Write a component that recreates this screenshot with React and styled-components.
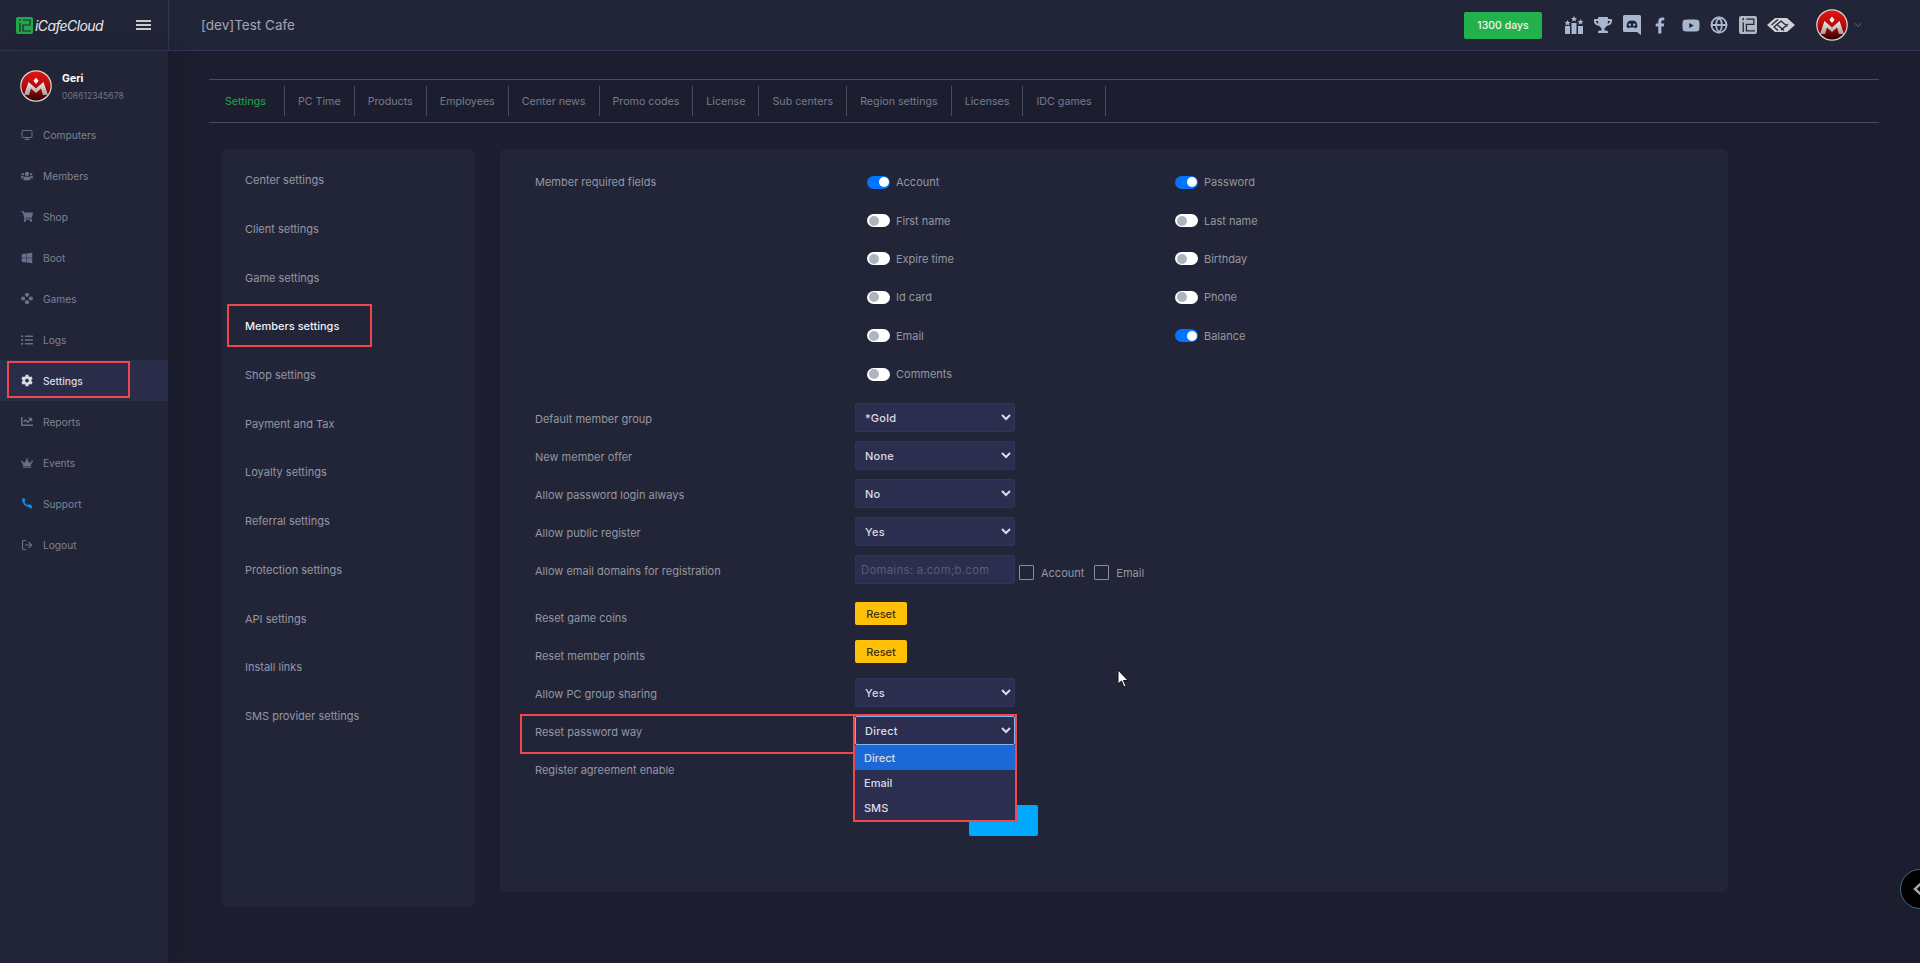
import React from 'react';
import styled, { createGlobalStyle } from 'styled-components';
import {
    FaUsers, FaShoppingCart, FaWindows, FaListUl, FaCog, FaChartLine,
    FaCrown, FaTrophy, FaFacebookF, FaYoutube,
} from 'react-icons/fa';
import { FiMonitor, FiGlobe, FiChevronDown, FiLogOut } from 'react-icons/fi';

const GlobalStyle = createGlobalStyle`
    html, body {
        margin: 0;
        height: 100%;
        background: #1c1e2f;
        overflow: hidden;
    }
    * { box-sizing: border-box; }
    body {
        font-family: Inter, "Noto Sans", "Liberation Sans", sans-serif;
        font-size: 11px;
    }
`;

const Page = styled.div`
    position: relative;
    width: 1920px;
    height: 963px;
    overflow: hidden;
    display: flex;
    flex-direction: column;
`;

// top bar
const TopBar = styled.header`
    height: 51px;
    flex: none;
    display: flex;
    align-items: center;
    background: #222538;
    border-bottom: 1px solid #333655;
`;

const Brand = styled.div`
    width: 169px;
    height: 50px;
    flex: none;
    display: flex;
    align-items: center;
    padding-left: 16px;
    border-right: 1px solid #333655;
    color: #e6e7ea;
`;

const BrandName = styled.span`
    margin-left: 2px;
    width: 67px;
    font-size: 14px;
    font-style: italic;
    letter-spacing: -.6px;
    white-space: nowrap;
`;

const Burger = styled.span`
    margin-left: 34px;
    width: 15px;
    height: 10px;
    border-top: 2px solid #c8cad0;
    border-bottom: 2px solid #c8cad0;
    position: relative;

    &::after {
        content: '';
        position: absolute;
        left: 0;
        right: 0;
        top: 2px;
        height: 2px;
        background: #c8cad0;
    }
`;

const CafeTitle = styled.div`
    margin-left: 32px;
    flex: 1;
    font-size: 13.5px;
    color: #a4a6b2;
`;

const DaysBadge = styled.div`
    width: 78px;
    height: 27px;
    margin-right: 22px;
    border-radius: 2px;
    display: flex;
    align-items: center;
    justify-content: center;
    background: #22b14c;
    color: #f1f7f2;
    font-size: 10.5px;
    font-weight: 500;
`;

const IconLinks = styled.div`
    display: flex;
    align-items: center;
    color: #a8b6cf;
`;

const IconLink = styled.span`
    display: flex;
    align-items: center;
    justify-content: center;
    width: ${p => p.$w}px;
    margin-right: ${p => p.$gap}px;
`;

const UserMenu = styled.div`
    margin-left: 21px;
    margin-right: 56px;
    display: flex;
    align-items: center;
    gap: 4px;
    color: #5e6a85;
`;

// body
const Body = styled.div`
    flex: 1;
    display: flex;
    min-height: 0;
`;

const Sidebar = styled.aside`
    width: 168px;
    flex: none;
    background: #222538;
    box-shadow: 6px 0 18px rgba(18, 19, 32, .25);
`;

const Profile = styled.div`
    height: 63px;
    display: flex;
    align-items: center;
    padding: 7px 0 0 20px;
    gap: 10px;
`;

const ProfileName = styled.div`
    font-size: 10.5px;
    font-weight: 700;
    color: #fff;
    margin-bottom: 6px;
`;

const ProfilePhone = styled.div`
    font-size: 8.6px;
    color: #6f7488;
`;

const NavList = styled.nav`
    display: flex;
    flex-direction: column;
`;

const NavItem = styled.div`
    position: relative;
    height: 41px;
    display: flex;
    align-items: center;
    padding-left: 21px;
    gap: 10px;
    font-size: 10.2px;
    font-weight: ${p => (p.$active ? 500 : 400)};
    color: ${p => (p.$active ? '#d7d9e2' : '#7d8294')};
    background: ${p => (p.$active ? '#2a2d4a' : 'transparent')};
`;

const NavIcon = styled.span`
    width: 12px;
    height: 14px;
    display: flex;
    align-items: center;
    justify-content: center;
    color: ${p => (p.$active ? '#d7d9e2' : '#66708a')};
`;

const Annotation = styled.span`
    position: absolute;
    left: ${p => p.$left}px;
    top: ${p => p.$top}px;
    width: ${p => p.$w}px;
    height: ${p => p.$h}px;
    border: 2px solid #f0474c;
    pointer-events: none;
    z-index: 3;
`;

const Main = styled.main`
    flex: 1;
    padding: 28px 41px 0;
    min-width: 0;
`;

const Tabs = styled.div`
    height: 44px;
    display: flex;
    align-items: center;
    border-top: 1px solid #4a4c5e;
    border-bottom: 1px solid #4a4c5e;
    font-size: 10.7px;
`;

const Tab = styled.div`
    height: 30px;
    display: flex;
    align-items: center;
    padding: 0 ${p => (p.$first ? 18 : 13)}px 0 ${p => (p.$first ? 16 : 13)}px;
    border-right: 1px solid #4a4c5e;
    color: ${p => (p.$active ? '#22a84a' : '#777b8e')};
`;

const Content = styled.div`
    display: flex;
    gap: 25px;
    margin: 26px 0 0 13px;
    align-items: flex-start;
`;

const SideMenu = styled.div`
    width: 253px;
    height: 758px;
    padding-top: 7px;
    border-radius: 6px;
    background: #222538;
`;

const SideMenuItem = styled.div`
    position: relative;
    height: 48.7px;
    display: flex;
    align-items: center;
    padding-left: 23px;
    font-weight: ${p => (p.$active ? 500 : 400)};
    color: ${p => (p.$active ? '#f0f1f5' : '#9497a5')};
`;

const Panel = styled.div`
    position: relative;
    width: 1228px;
    height: 743px;
    padding: 14px 0 0 35px;
    border-radius: 6px;
    background: #222538;
`;

const Row = styled.div`
    position: relative;
    display: flex;
    height: 38px;
    margin-top: ${p => p.$mt || 0}px;
`;

const RowLabel = styled.div`
    width: 320px;
    flex: none;
    padding-top: 13px;
    color: #94979f;
`;

const RowControl = styled.div`
    position: relative;
    display: flex;
    align-items: flex-start;
    padding-top: 4px;
`;

const FieldsRow = styled.div`
    display: flex;
    margin-bottom: 6px;
`;

const FieldsGrid = styled.div`
    margin-left: 12px;
    display: grid;
    grid-template-columns: 308px 308px;
    grid-auto-rows: 38.4px;
`;

const ToggleField = styled.div`
    display: flex;
    align-items: center;
    gap: 6px;
    color: #94979f;
`;

const FieldsLabel = styled(RowLabel)`
    padding-top: 12px;
`;

const Toggle = styled.span`
    position: relative;
    width: 23px;
    height: 13px;
    border-radius: 7px;
    background: ${p => (p.$on ? '#0075ff' : '#fff')};

    &::after {
        content: '';
        position: absolute;
        top: 1.5px;
        left: ${p => (p.$on ? '12px' : '1.5px')};
        width: 10px;
        height: 10px;
        border-radius: 50%;
        background: ${p => (p.$on ? '#fff' : '#adb5bd')};
    }
`;

const Select = styled.select`
    width: 160px;
    height: 29px;
    padding: 0 5px;
    border-radius: 2px;
    border: 1px solid ${p => (p.$focused ? '#7fb4f5' : '#30345a')};
    background-color: #2c2e4f;
    color: #dcdde4;
    font: 500 11px Inter, sans-serif;
    letter-spacing: .25px;
    outline: none;
`;

const DomainInput = styled.input`
    width: 160px;
    height: 29px;
    padding: 0 5px;
    border-radius: 2px;
    border: 1px solid #30345a;
    background: #2c2e4f;
    color: #dcdde4;
    font: 400 11.3px Inter, sans-serif;
    letter-spacing: .3px;

    &::placeholder {
        color: #5a5d72;
    }
`;

const CheckField = styled.label`
    display: flex;
    align-items: center;
    gap: 7px;
    height: 29px;
    margin-left: ${p => p.$ml}px;
    padding-top: 6px;
    color: #94979f;
`;

const CheckMark = styled.span`
    width: 15px;
    height: 15px;
    border: 1px solid #8b8e9c;
    border-radius: 1px;
`;

const ResetButton = styled.button`
    width: 52px;
    height: 23px;
    border: 0;
    border-radius: 2px;
    background: #ffc107;
    color: #3d3310;
    font: 500 11px Inter, sans-serif;
`;

const SaveButton = styled.button`
    display: block;
    width: 69px;
    height: 31px;
    margin: 17px 0 0 434px;
    border: 0;
    border-radius: 2px;
    background: #00a8ff;
`;

const DropdownList = styled.ul`
    position: absolute;
    left: 0;
    top: 33px;
    width: 160px;
    margin: 0;
    padding: 0 0 1px;
    list-style: none;
    background: #2c2e4f;
    color: #dcdde4;
    font-weight: 500;
    z-index: 2;
`;

const DropdownOption = styled.li`
    height: 25px;
    display: flex;
    align-items: center;
    padding-left: 9px;
    background: ${p => (p.$selected ? '#1a69d6' : 'transparent')};
`;

const Pointer = styled.svg`
    position: absolute;
    left: 1117px;
    top: 669px;
    z-index: 5;
`;

const FloatHandle = styled.div`
    position: absolute;
    left: 1900px;
    top: 869px;
    width: 40px;
    height: 40px;
    padding-left: 12px;
    display: flex;
    align-items: center;
    border-radius: 50%;
    background: #000;
    border: 1px solid #3d6f78;
`;

// drawings
const ICafeMark = ({ size = 17, fill = '#22a84a', line = '#222538' }) => (
    <svg width={size} height={size} viewBox="0 0 17 17">
        <rect width="17" height="17" rx="2" fill={fill} />
        <path d="M4 2v2M4 6v9" stroke={line} strokeWidth="1.2" fill="none" />
        <path d="M7 3h7v5H7v6h8" stroke={line} strokeWidth="1.2" fill="none" />
    </svg>
);

const Avatar = ({ id, size }) => (
    <svg width={size} height={size} viewBox="0 0 32 32">
        <defs>
            <linearGradient id={id} x1="0" y1="0" x2="0" y2="1">
                <stop offset="0" stopColor="#e81212" />
                <stop offset=".55" stopColor="#b00b0b" />
                <stop offset="1" stopColor="#230303" />
            </linearGradient>
            <linearGradient id={`${id}M`} x1="0" y1="0" x2="0" y2="1">
                <stop offset="0" stopColor="#f4efef" />
                <stop offset="1" stopColor="#a89a9a" />
            </linearGradient>
        </defs>
        <circle cx="16" cy="16" r="15.2" fill={`url(#${id})`} stroke="#d8d8d8" strokeWidth="1.2" />
        <path d="M4 25 8.500 12l7.500 6.500L23.500 12 28 25h-5l-2-6.500-5 4.500-5-4.500L9 25z" fill={`url(#${id}M)`} />
        <path d="M16 7.500l2.600 3.200-2.600 3.200-2.600-3.200z" fill="#f3eeee" />
    </svg>
);

const PodiumIcon = () => (
    <svg width="20" height="20" viewBox="0 0 20 20" fill="currentColor">
        <rect x="1" y="11" width="5" height="8" />
        <rect x="7.500" y="8" width="5" height="11" />
        <rect x="14" y="11" width="5" height="8" />
        <path d="M3.500 5l1 2 2 .2-1.500 1.400.4 2-1.900-1-1.900 1 .4-2L.5 7.200l2-.2zM10 1l1 2 2 .2-1.500 1.400.4 2-1.900-1-1.900 1 .4-2L7 3.200 9 3zM16.500 4l1 2 2 .2-1.500 1.400.4 2-1.900-1-1.900 1 .4-2-1.500-1.400 2-.2z" />
    </svg>
);

const DiscordIcon = () => (
    <svg width="18" height="20" viewBox="0 0 18 20">
        <path d="M1.500 0h15A1.500 1.500 0 0 1 18 1.500V20l-4-3H1.500A1.500 1.500 0 0 1 0 15.500v-14A1.500 1.500 0 0 1 1.500 0z" fill="#a8b6cf" />
        <path d="M5 6.500c2.500-1.200 5.500-1.200 8 0 1 1.800 1.500 3.600 1.400 5.500-1 .8-2 1.200-2.800 1.300l-.6-1c-1.300.3-2.700.3-4 0l-.6 1c-.8-.1-1.800-.5-2.800-1.300-.1-1.900.4-3.700 1.400-5.500z" fill="#222538" />
        <circle cx="6.800" cy="9.800" r="1.200" fill="#a8b6cf" />
        <circle cx="11.200" cy="9.800" r="1.200" fill="#a8b6cf" />
    </svg>
);

const StripeLogo = () => (
    <svg width="28" height="16" viewBox="0 0 28 16">
        <path d="M8 1h12l8 7-8 7H8L0 8z" fill="#cdd0d5" />
        <path d="M4.500 8 11 2.500M11 13.500l-4-3.500 7-6 6.500 5.500M17 13.500 10.500 8M14 13l7-6" stroke="#222538" strokeWidth="1.300" fill="none" />
    </svg>
);

const GamesIcon = () => (
    <svg width="13" height="13" viewBox="0 0 13 13" fill="currentColor">
        <circle cx="6.500" cy="2.500" r="2.300" />
        <circle cx="2.300" cy="6.500" r="2.300" />
        <circle cx="10.700" cy="6.500" r="2.300" />
        <circle cx="6.500" cy="10.500" r="2.300" />
    </svg>
);

const PhoneIcon = () => (
    <svg width="13" height="13" viewBox="0 0 13 13">
        <path d="M1 1.500 3.500.5l1.500 3-1.400 1.200c.7 1.600 2 3 3.700 3.800L8.600 7l3 1.500-.8 2.200C6 11.200 1 6.500 1 1.500z" fill="#0a8cf5" />
        <path d="M8.600 11.200 12 11l-.3-2.400z" fill="#0a8cf5" />
        <circle cx="10.800" cy="11" r="1" fill="#19a463" />
    </svg>
);

const NAV_ITEMS = [
    { label: 'Computers', icon: <FiMonitor size={14} /> },
    { label: 'Members', icon: <FaUsers size={14} /> },
    { label: 'Shop', icon: <FaShoppingCart size={13} /> },
    { label: 'Boot', icon: <FaWindows size={12} /> },
    { label: 'Games', icon: <GamesIcon /> },
    { label: 'Logs', icon: <FaListUl size={12} /> },
    { label: 'Settings', icon: <FaCog size={13} />, active: true },
    { label: 'Reports', icon: <FaChartLine size={13} /> },
    { label: 'Events', icon: <FaCrown size={12} /> },
    { label: 'Support', icon: <PhoneIcon /> },
    { label: 'Logout', icon: <FiLogOut size={14} strokeWidth={2.4} /> },
];

const TABS = [
    'Settings', 'PC Time', 'Products', 'Employees', 'Center news', 'Promo codes',
    'License', 'Sub centers', 'Region settings', 'Licenses', 'IDC games',
];

const MENU_ITEMS = [
    'Center settings', 'Client settings', 'Game settings', 'Members settings',
    'Shop settings', 'Payment and Tax', 'Loyalty settings', 'Referral settings',
    'Protection settings', 'API settings', 'Install links', 'SMS provider settings',
];

const REQUIRED_FIELDS = [
    ['Account', true], ['Password', true],
    ['First name', false], ['Last name', false],
    ['Expire time', false], ['Birthday', false],
    ['Id card', false], ['Phone', false],
    ['Email', false], ['Balance', true],
    ['Comments', false],
];

function SelectRow({ label, value, focused, children }) {
    return (
        <Row>
            <RowLabel>{label}</RowLabel>
            <RowControl>
                <Select defaultValue={value} $focused={focused}>
                    <option>{value}</option>
                </Select>
                {children}
            </RowControl>
        </Row>
    );
}

function App() {
    return (
        <Page>
            <GlobalStyle />
            <TopBar>
                <Brand>
                    <ICafeMark />
                    <BrandName>iCafeCloud</BrandName>
                    <Burger />
                </Brand>
                <CafeTitle>[dev]Test Cafe</CafeTitle>
                <DaysBadge>1300 days</DaysBadge>
                <IconLinks>
                    <IconLink $w={20} $gap={10}><PodiumIcon /></IconLink>
                    <IconLink $w={18} $gap={11}><FaTrophy size={18} /></IconLink>
                    <IconLink $w={18} $gap={14}><DiscordIcon /></IconLink>
                    <IconLink $w={10} $gap={17}><FaFacebookF size={17} /></IconLink>
                    <IconLink $w={18} $gap={10}><FaYoutube size={19} /></IconLink>
                    <IconLink $w={18} $gap={11}><FiGlobe size={18} strokeWidth={2.4} /></IconLink>
                    <IconLink $w={18} $gap={10}><ICafeMark size={18} fill="#b4b8c2" /></IconLink>
                    <IconLink $w={28} $gap={0}><StripeLogo /></IconLink>
                </IconLinks>
                <UserMenu>
                    <Avatar id="topAvatar" size={32} />
                    <FiChevronDown size={12} />
                </UserMenu>
            </TopBar>

            <Body>
                <Sidebar>
                    <Profile>
                        <Avatar id="sideAvatar" size={32} />
                        <div>
                            <ProfileName>Geri</ProfileName>
                            <ProfilePhone>008612345678</ProfilePhone>
                        </div>
                    </Profile>
                    <NavList>
                        {NAV_ITEMS.map(item => (
                            <NavItem key={item.label} $active={item.active}>
                                <NavIcon $active={item.active}>{item.icon}</NavIcon>
                                {item.label}
                                {item.active && <Annotation $left={7} $top={1} $w={123} $h={37} />}
                            </NavItem>
                        ))}
                    </NavList>
                </Sidebar>

                <Main>
                    <Tabs>
                        {TABS.map((tab, i) => (
                            <Tab key={tab} $first={i === 0} $active={i === 0}>{tab}</Tab>
                        ))}
                    </Tabs>

                    <Content>
                        <SideMenu>
                            {MENU_ITEMS.map(item => (
                                <SideMenuItem key={item} $active={item === 'Members settings'}>
                                    {item}
                                    {item === 'Members settings' && (
                                        <Annotation $left={5} $top={2} $w={145} $h={43} />
                                    )}
                                </SideMenuItem>
                            ))}
                        </SideMenu>

                        <Panel>
                            <FieldsRow>
                                <FieldsLabel>Member required fields</FieldsLabel>
                                <FieldsGrid>
                                    {REQUIRED_FIELDS.map(([name, on]) => (
                                        <ToggleField key={name}>
                                            <Toggle $on={on} />
                                            {name}
                                        </ToggleField>
                                    ))}
                                </FieldsGrid>
                            </FieldsRow>

                            <SelectRow label="Default member group" value="*Gold" />
                            <SelectRow label="New member offer" value="None" />
                            <SelectRow label="Allow password login always" value="No" />
                            <SelectRow label="Allow public register" value="Yes" />

                            <Row>
                                <RowLabel>Allow email domains for registration</RowLabel>
                                <RowControl>
                                    <DomainInput placeholder="Domains: a.com;b.com" />
                                    <CheckField $ml={4}><CheckMark />Account</CheckField>
                                    <CheckField $ml={10}><CheckMark />Email</CheckField>
                                </RowControl>
                            </Row>

                            <Row $mt={9}>
                                <RowLabel>Reset game coins</RowLabel>
                                <RowControl><ResetButton>Reset</ResetButton></RowControl>
                            </Row>
                            <Row>
                                <RowLabel>Reset member points</RowLabel>
                                <RowControl><ResetButton>Reset</ResetButton></RowControl>
                            </Row>

                            <SelectRow label="Allow PC group sharing" value="Yes" />

                            <SelectRow label="Reset password way" value="Direct" focused>
                                <Annotation $left={-335} $top={2} $w={335} $h={40} />
                                <DropdownList>
                                    <DropdownOption $selected>Direct</DropdownOption>
                                    <DropdownOption>Email</DropdownOption>
                                    <DropdownOption>SMS</DropdownOption>
                                </DropdownList>
                                <Annotation $left={-2} $top={2} $w={164} $h={108} />
                            </SelectRow>

                            <Row>
                                <RowLabel>Register agreement enable</RowLabel>
                            </Row>

                            <SaveButton />
                        </Panel>
                    </Content>
                </Main>
            </Body>

            <Pointer width="13" height="19" viewBox="0 0 13 19">
                <path d="M1 1v14l3.500-3 2.500 6 2-1-2.500-5.500H11z" fill="#fff" stroke="#111" strokeWidth="1" />
            </Pointer>

            <FloatHandle>
                <svg width="10" height="14" viewBox="0 0 10 14" fill="none" stroke="#a9a9a9" strokeWidth="2.500">
                    <path d="M8 1.500 2 7l6 5.500" />
                </svg>
            </FloatHandle>
        </Page>
    );
}

export default App;
